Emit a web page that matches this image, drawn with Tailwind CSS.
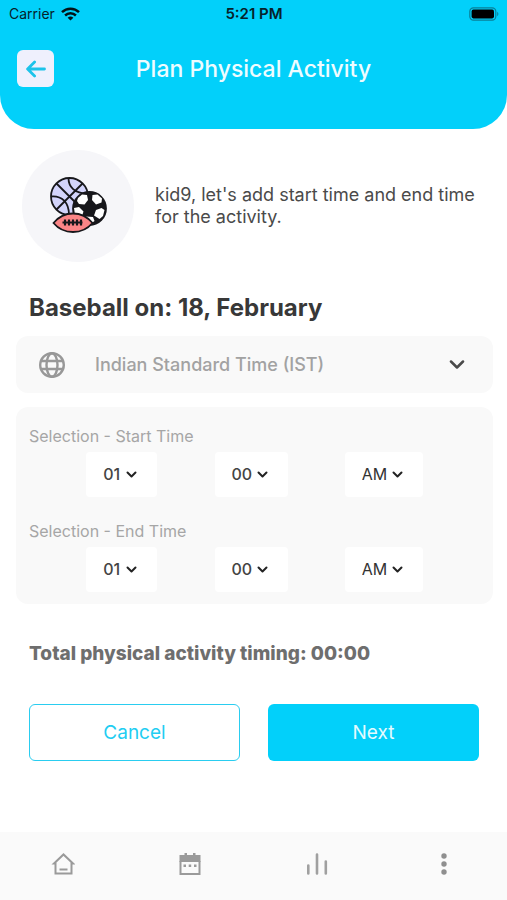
<!DOCTYPE html>
<html lang="en">
<head>
<meta charset="utf-8">
<meta name="viewport" content="width=device-width, initial-scale=1">
<title>Plan Physical Activity</title>
<script src="https://cdn.jsdelivr.net/npm/@tailwindcss/browser@4"></script>
</head>
<body class="flex min-h-screen flex-col bg-white font-['Inter','Liberation_Sans',sans-serif] text-[#3c3c3c]">
  <header class="rounded-b-[34px] bg-[#02d0fa] pb-[42px]">
    <div class="grid h-7 grid-cols-3 items-center pr-2 pl-[9px] text-sm text-[#06222b]">
      <div class="flex items-center gap-[6px]">
        <span>Carrier</span>
        <svg class="h-[14px] w-[19px]" viewBox="0 0 19 14" fill="none" stroke="#021318" stroke-width="2.5" aria-hidden="true">
          <path d="M1 5.2a12.2 12.2 0 0 1 17 0"/><path d="M4.1 8.5a7.8 7.8 0 0 1 10.8 0"/><path d="M9.5 13.6 6.6 10.8a4.2 4.2 0 0 1 5.8 0Z" fill="#021318" stroke="none"/>
        </svg>
      </div>
      <span class="text-center text-[15px] font-semibold">5:21 PM</span>
      <svg class="h-[14px] w-[30px] justify-self-end" viewBox="0 0 30 14" aria-hidden="true">
        <rect x=".8" y=".8" width="26" height="12.4" rx="3.6" fill="none" stroke="#0a7f98" stroke-width="1.2"/>
        <rect x="2.6" y="2.6" width="22.4" height="8.8" rx="1.8" fill="#000"/>
        <path d="M28.2 4.8v4.4c1.6-.7 1.6-3.7 0-4.4Z" fill="#0a7f98"/>
      </svg>
    </div>
    <div class="mt-[22px] grid grid-cols-[37px_1fr_37px] items-center px-[17px]">
      <button type="button" aria-label="Back" class="flex size-[37px] items-center justify-center rounded-md bg-[#eff0fd]">
        <svg class="h-[18px] w-5" viewBox="0 0 20 18" fill="none" stroke="#1cc3ea" stroke-width="2.8" stroke-linecap="round" stroke-linejoin="round" aria-hidden="true"><path d="M18.5 9H2M8.6 2 1.6 9l7 7"/></svg>
      </button>
      <h1 class="text-center text-[23px] leading-7 font-medium text-[#eefcff]">Plan Physical Activity</h1>
    </div>
  </header>

  <main class="flex-1">
    <section class="flex items-center gap-[21px] pt-[21px] pr-5 pl-[22px]">
      <div class="flex size-28 shrink-0 items-center justify-center rounded-full bg-[#f6f6f9]">
        <svg class="size-[58px]" viewBox="0 0 58 58" fill="none" stroke="#17171b" stroke-width="1.800" aria-hidden="true">
          <circle cx="20.500" cy="19.500" r="18.500" fill="#d3d4fb"/>
          <path d="M33.500 6.500 7.500 32.500M7.500 6.500 33.500 32.500M19.500 1c0 9 6 15.500 19 15.500M2 19.500c11-1 18 6 18 18.500"/>
          <circle cx="40.500" cy="31.500" r="16.500" fill="#17171b"/>
          <g fill="#fff" stroke="none">
            <path d="m29 21 4-3.500 5 .5 1 5-3.500 4.500-5.500-.5-2-3Z"/><path d="m43.500 18 5-.5 4.500 4-.5 4-5.500 2-4-4.500Z"/>
            <path d="m25 31 5-1 4.500 4.500-1.500 4.500-7-1Z"/><path d="m47 33 5.500-2 3 2-1.500 6-3.500 3-5.500-3.500Z"/><path d="m37 39.500 7 .5 1.500 4-3.500 2.500Z"/>
          </g>
          <path d="M4.500 46c5-6 12-9.500 19.500-9.500S38.500 40 43.500 46c-5 6-12 9-19.500 9S9.500 52 4.500 46Z" fill="#fb8587"/>
          <path d="M13.500 45.500h20M16 42.500v6M20 42.500v6M24 42.500v6M28 42.500v6M32 42.500v6" stroke-width="2.200"/>
        </svg>
      </div>
      <p class="text-lg leading-[22px] text-[#4a4a4a]">kid9, let's add start time and end time for the activity.</p>
    </section>

    <h2 class="mt-[30px] pl-[29px] text-2xl leading-8 font-bold text-[#383838]">Baseball on: 18, February</h2>

    <div class="mt-3 px-4 pr-[14px]">
      <div class="relative">
        <svg class="pointer-events-none absolute top-4 left-[23px] size-[26px]" viewBox="0 0 26 26" fill="none" stroke="#989898" stroke-width="2.400" aria-hidden="true">
          <circle cx="13" cy="13" r="11.800"/><ellipse cx="13" cy="13" rx="5.500" ry="11.800"/><path d="M2 9h22M2 17h22"/>
        </svg>
        <select aria-label="Time zone" class="block h-[57px] w-full appearance-none rounded-xl bg-[#f9f9f9] pr-14 pl-[79px] text-lg font-medium text-[#a2a2a2]">
          <option>Indian Standard Time (IST)</option>
        </select>
        <svg class="pointer-events-none absolute top-6 right-7 h-[10px] w-4" viewBox="0 0 16 10" fill="none" stroke="#4a4a4a" stroke-width="2.500" stroke-linecap="round" stroke-linejoin="round" aria-hidden="true"><path d="m2 1.500 6 6 6-6"/></svg>
      </div>

      <div class="mt-[14px] rounded-xl bg-[#f9f9f9] px-[13px] pt-[19px] pb-3">
        <fieldset>
          <legend class="text-base leading-5 text-[#a6a6a6]">Selection - Start Time</legend>
          <div class="mt-[6px] flex justify-evenly">
            <div class="relative">
              <select aria-label="Start hour" class="block h-[45px] w-[71px] appearance-none rounded bg-white pb-[2px] pl-[17px] text-base font-medium text-[#444]"><option>01</option></select>
              <svg class="pointer-events-none absolute top-[19px] right-5 h-[7px] w-[11px]" viewBox="0 0 11 7" fill="none" stroke="#222" stroke-width="2" stroke-linecap="round" stroke-linejoin="round" aria-hidden="true"><path d="m1.500 1.500 4 4 4-4"/></svg>
            </div>
            <div class="relative">
              <select aria-label="Start minute" class="block h-[45px] w-[73px] appearance-none rounded bg-white pb-[2px] pl-[17px] text-base font-medium text-[#444]"><option>00</option></select>
              <svg class="pointer-events-none absolute top-[19px] right-5 h-[7px] w-[11px]" viewBox="0 0 11 7" fill="none" stroke="#222" stroke-width="2" stroke-linecap="round" stroke-linejoin="round" aria-hidden="true"><path d="m1.500 1.500 4 4 4-4"/></svg>
            </div>
            <div class="relative">
              <select aria-label="Start period" class="block h-[45px] w-[78px] appearance-none rounded bg-white pb-[2px] pl-[17px] text-base text-[#333]"><option>AM</option></select>
              <svg class="pointer-events-none absolute top-[19px] right-5 h-[7px] w-[11px]" viewBox="0 0 11 7" fill="none" stroke="#222" stroke-width="2" stroke-linecap="round" stroke-linejoin="round" aria-hidden="true"><path d="m1.500 1.500 4 4 4-4"/></svg>
            </div>
          </div>
        </fieldset>
        <fieldset class="mt-6">
          <legend class="text-base leading-5 text-[#a6a6a6]">Selection - End Time</legend>
          <div class="mt-[6px] flex justify-evenly">
            <div class="relative">
              <select aria-label="End hour" class="block h-[45px] w-[71px] appearance-none rounded bg-white pb-[2px] pl-[17px] text-base font-medium text-[#444]"><option>01</option></select>
              <svg class="pointer-events-none absolute top-[19px] right-5 h-[7px] w-[11px]" viewBox="0 0 11 7" fill="none" stroke="#222" stroke-width="2" stroke-linecap="round" stroke-linejoin="round" aria-hidden="true"><path d="m1.500 1.500 4 4 4-4"/></svg>
            </div>
            <div class="relative">
              <select aria-label="End minute" class="block h-[45px] w-[73px] appearance-none rounded bg-white pb-[2px] pl-[17px] text-base font-medium text-[#444]"><option>00</option></select>
              <svg class="pointer-events-none absolute top-[19px] right-5 h-[7px] w-[11px]" viewBox="0 0 11 7" fill="none" stroke="#222" stroke-width="2" stroke-linecap="round" stroke-linejoin="round" aria-hidden="true"><path d="m1.500 1.500 4 4 4-4"/></svg>
            </div>
            <div class="relative">
              <select aria-label="End period" class="block h-[45px] w-[78px] appearance-none rounded bg-white pb-[2px] pl-[17px] text-base text-[#333]"><option>AM</option></select>
              <svg class="pointer-events-none absolute top-[19px] right-5 h-[7px] w-[11px]" viewBox="0 0 11 7" fill="none" stroke="#222" stroke-width="2" stroke-linecap="round" stroke-linejoin="round" aria-hidden="true"><path d="m1.500 1.500 4 4 4-4"/></svg>
            </div>
          </div>
        </fieldset>
      </div>
    </div>

    <p class="mt-[38px] pl-[29px] text-[19px] leading-6 font-extrabold text-[#6e6e6e]">Total physical activity timing: 00:00</p>

    <div class="mt-[38px] grid grid-cols-2 gap-7 pr-7 pl-[29px]">
      <button type="button" class="h-[57px] rounded-md border border-[#2acdf0] pt-[2px] text-[19px] text-[#22cdf2]">Cancel</button>
      <button type="button" class="h-[57px] rounded-md bg-[#02d0fa] pt-[2px] text-[19px] text-[#e4fbff]">Next</button>
    </div>
  </main>

  <nav aria-label="Main" class="grid h-[68px] grid-cols-4 bg-[#fafafa] pb-1">
    <a href="#home" aria-label="Home" class="flex items-center justify-center">
      <svg class="size-6" viewBox="0 0 24 24" fill="none" stroke="#9a9a9a" stroke-width="2" aria-hidden="true"><path d="M3 11.500h1.500V21.500h16V11.500H22L12.500 2.500Z"/><path d="M8.500 17.500h8"/></svg>
    </a>
    <a href="#calendar" aria-label="Calendar" class="flex items-center justify-center">
      <svg class="size-6" viewBox="0 0 24 24" fill="#9a9a9a" aria-hidden="true"><path d="M6.500 1h2.500v3H6.500zM15 1h2.500v3H15zM1.500 3h21v7h-21zM5.500 12.500h2.500V15H5.500zM10.700 12.500h2.500V15h-2.500zM16 12.500h2.500V15H16z"/><path d="M2.500 9v13h19V9" fill="none" stroke="#9a9a9a" stroke-width="2"/></svg>
    </a>
    <a href="#stats" aria-label="Statistics" class="flex items-center justify-center">
      <svg class="size-6" viewBox="0 0 24 24" stroke="#a0a0a0" stroke-width="2.600" stroke-linecap="round" aria-hidden="true"><path d="M3.300 13.500v8M12 2.500v19M20.800 9.500v12"/></svg>
    </a>
    <a href="#more" aria-label="More" class="flex items-center justify-center">
      <svg class="size-6" viewBox="0 0 24 24" fill="#8f8f8f" aria-hidden="true"><circle cx="12" cy="4" r="2.700"/><circle cx="12" cy="12" r="2.700"/><circle cx="12" cy="20" r="2.700"/></svg>
    </a>
  </nav>
</body>
</html>
